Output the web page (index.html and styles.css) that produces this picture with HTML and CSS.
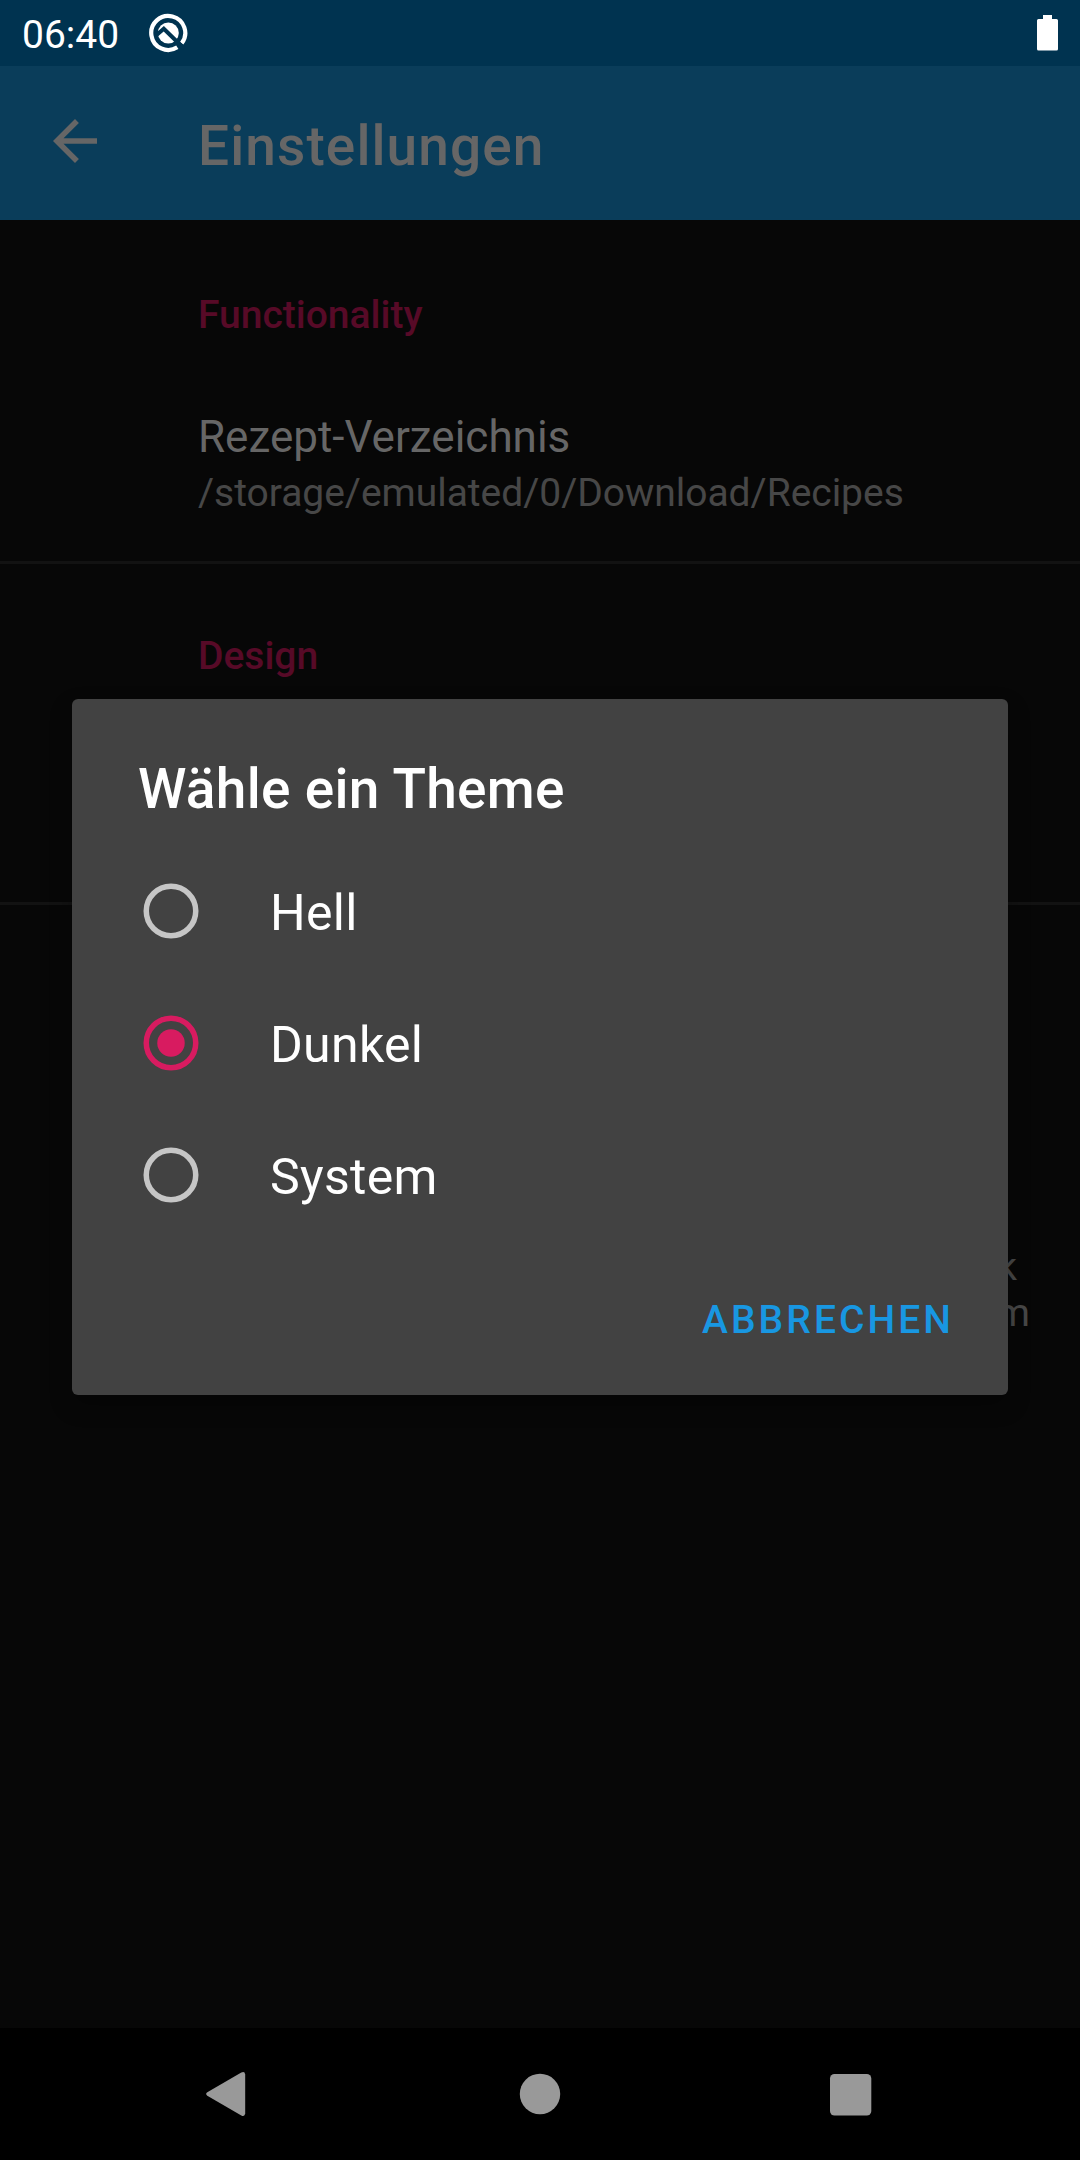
FILE: index.html
```html
<!DOCTYPE html>
<html lang="de">
<head>
<meta charset="utf-8">
<title>Einstellungen</title>
<link rel="stylesheet" href="styles.css">
</head>
<body>
<div class="screen">
  <header class="status">
    <span class="clock">06:40</span>
    <svg class="status-logo" viewBox="0 0 40 40" width="40" height="40">
      <path d="M33.700 30.300A17 17 0 1 0 29.300 34.300" class="ring"/>
      <circle cx="20.300" cy="20" r="10.500" fill="#fff"/>
      <path d="M8 22.500L15.800 15.800L36 35.500" class="cut"/>
    </svg>
    <svg class="battery" viewBox="0 0 21 36" width="21" height="36">
      <path d="M6 0h9v4h4.500q1.500 0 1.500 1.500v28.500q0 1.500-1.500 1.500h-18q-1.500 0-1.500-1.500v-28.500q0-1.500 1.500-1.500h4.500z" fill="#fff"/>
    </svg>
  </header>
  <nav class="toolbar">
    <svg class="back" viewBox="0 0 24 24" width="66" height="66"><path d="M20 11H7.830l5.590-5.590L12 4l-8 8 8 8 1.410-1.410L7.830 13H20v-2z" fill="#666"/></svg>
    <h1 class="title">Einstellungen</h1>
  </nav>
  <main class="content">
    <section class="group">
      <h2 class="category">Functionality</h2>
      <div class="pref">
        <div class="pref-name">Rezept-Verzeichnis</div>
        <div class="pref-value">/storage/emulated/0/Download/Recipes</div>
      </div>
    </section>
    <section class="group">
      <h2 class="category">Design</h2>
    </section>
    <section class="about">
      <div class="line line-first">k</div>
      <div class="line">m</div>
    </section>
  </main>
  <footer class="navbar">
    <svg viewBox="0 0 66 66" width="66" height="66"><path d="M12.300 31.300L46.300 11.600Q49.700 9.800 50.200 13.500V52.500Q49.700 56.200 46.300 54.400L12.300 34.700Q10 33 12.300 31.300Z" fill="#999"/></svg>
    <svg viewBox="0 0 66 66" width="66" height="66"><circle cx="33" cy="33" r="20.200" fill="#999"/></svg>
    <svg viewBox="0 0 66 66" width="66" height="66"><rect x="12" y="13" width="41.300" height="41.500" rx="4.500" fill="#999"/></svg>
  </footer>
  <div class="dialog" role="dialog">
    <h2 class="dialog-title">Wähle ein Theme</h2>
    <div class="options">
      <div class="option"><svg class="radio" viewBox="0 0 24 24" width="66" height="66"><circle cx="12" cy="12" r="9"/></svg><span>Hell</span></div>
      <div class="option"><svg class="radio checked" viewBox="0 0 24 24" width="66" height="66"><circle cx="12" cy="12" r="9"/><circle class="dot" cx="12" cy="12" r="5"/></svg><span>Dunkel</span></div>
      <div class="option"><svg class="radio" viewBox="0 0 24 24" width="66" height="66"><circle cx="12" cy="12" r="9"/></svg><span>System</span></div>
    </div>
    <div class="actions"><span class="button">ABBRECHEN</span></div>
  </div>
</div>
</body>
</html>
```
FILE: styles.css
```css
* { box-sizing: border-box; }
body { margin: 0; background: #070707; font-family: Roboto, sans-serif; }
h1, h2 { margin: 0; font-weight: 500; }
svg { display: block; flex: none; }

.screen {
  position: relative;
  display: flex;
  flex-direction: column;
  width: 1080px;
  height: 2160px;
  overflow: hidden;
  background: #070707;
}

.status {
  display: flex;
  height: 66px;
  padding: 0 22px 0 22px;
  background: #003350;
}
.clock { width: 126px; color: #fff; font-size: 39px; line-height: 70px; }
.status-logo { margin-top: 13px; }
.ring { fill: none; stroke: #fff; stroke-width: 4.2; }
.cut { fill: none; stroke: #003350; stroke-width: 4; }
.battery { margin: 15px 0 0 auto; }

.toolbar {
  display: flex;
  height: 154px;
  padding-left: 42px;
  background: #0a3d5a;
}
.back { margin-top: 42px; }
.title {
  margin-left: 90px;
  color: #666;
  font-size: 55px;
  line-height: 160px;
  letter-spacing: 1.1px;
}

.content { flex: 1; }
.group { height: 341px; padding: 69px 0 0 198px; border-bottom: 3px solid #121212; }
.group:first-child { height: 344px; padding-top: 72px; }
.category { color: #570a27; font-size: 39px; line-height: 46px; }
.pref { padding-top: 73px; }
.pref-name { color: #666; font-size: 44px; line-height: 52px; }
.pref-value { margin-top: 7px; color: #474747; font-size: 39px; line-height: 46px; letter-spacing: -0.03px; }
.about { padding: 339px 50px 0 0; color: #474747; font-size: 39px; line-height: 46px; text-align: right; }
.line-first { padding-right: 13px; }

.navbar {
  display: flex;
  justify-content: space-between;
  height: 132px;
  padding: 33px 196px 0 195px;
  background: #000;
}

.dialog {
  position: absolute;
  top: 699px;
  left: 72px;
  width: 936px;
  height: 696px;
  padding-top: 55px;
  border-radius: 6px;
  background: #424242;
  color: #fff;
  box-shadow: 0 10px 22px rgba(0, 0, 0, .3);
}
.dialog-title { padding-left: 66px; font-size: 55px; line-height: 70px; letter-spacing: 0.3px; }
.options { padding-top: 21px; }
.option {
  display: flex;
  align-items: center;
  gap: 66px;
  height: 132px;
  padding-left: 66px;
  font-size: 50px;
  letter-spacing: 0.3px;
}
.option span { line-height: 60px; padding-top: 3px; }
.radio { fill: none; stroke: #c6c6c6; stroke-width: 2; }
.checked { stroke: #d81b60; }
.dot { fill: #d81b60; stroke: none; }
.actions { display: flex; justify-content: flex-end; padding: 49px 54px 0 0; }
.button { color: #1897e2; font-size: 39px; font-weight: 500; line-height: 60px; letter-spacing: 3.05px; }
```
